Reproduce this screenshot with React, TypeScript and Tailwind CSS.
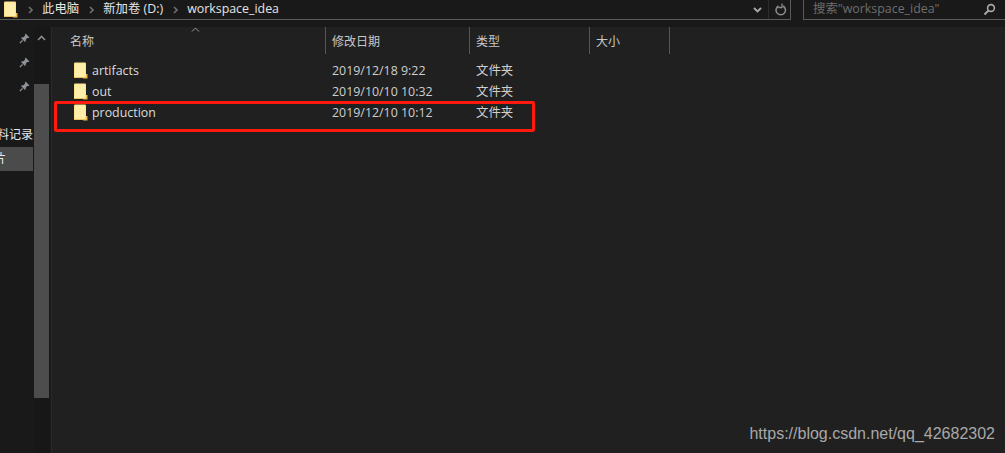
const font = "font-['Open_Sans','Noto_Sans_CJK_SC',sans-serif]";

function Folder() {
  return (
    <svg width="14" height="18" viewBox="0 0 14 18" className="shrink-0">
      <path d="M0 1.5 Q0 .5 1 .5 H11 Q12 .5 12 1.5 V16 H1 Q0 16 0 15 Z" fill="#fde48c" />
      <path d="M1 1.5 H11 V15 H1 Z" fill="#ffeeaa" />
      <path d="M9 16.5 H13.5 V12 H12 V15 H9 Z" fill="#e8b94a" />
      <path d="M0 15 H12 V16 H0 Z" fill="#eec45c" />
    </svg>
  );
}

function Chevron() {
  return (
    <svg width="5" height="8" viewBox="0 0 5 8" className="mx-[9.5px] shrink-0">
      <path d="M1 1 L4 4 L1 7" fill="none" stroke="#6e6e6e" strokeWidth="1.6" />
    </svg>
  );
}

function Pin() {
  return (
    <svg width="11" height="11" viewBox="0 0 11 11">
      <path d="M6.5 .5 L10.5 4.5 L9.5 5 L8.5 4.8 L6.8 6.6 L6.6 8.6 L6 9 L2 5 L2.4 4.4 L4.4 4.2 L6.2 2.5 L6 1.5 Z" fill="#8e949a" />
      <path d="M3.5 7.5 L.8 10.2" stroke="#8e949a" strokeWidth="1.2" />
    </svg>
  );
}

function Row({ name, date, mt }: { name: string; date: string; mt: string }) {
  return (
    <div className={`flex h-[18px] items-center text-[12.4px] text-[#dcdcdc] ${mt}`}>
      <div className="flex w-[280px] items-center gap-[4px] pl-[22px]">
        <Folder />
        <span>{name}</span>
      </div>
      <span className="w-[144px] text-[#cfcfcf]">{date}</span>
      <span className="text-[#cfcfcf]">文件夹</span>
    </div>
  );
}

function Head({ w, label }: { w: string; label: string }) {
  return (
    <div className={`flex h-[27px] items-center border-r border-[#555] pl-[6px] pt-[2px] text-[12px] text-[#c8c8c8] ${w}`}>
      {label}
    </div>
  );
}

export default function App() {
  return (
    <div className={`flex h-[453px] w-[1005px] flex-col overflow-hidden bg-[#202020] ${font}`}>
      <div className="flex h-[27px] shrink-0 items-start gap-[12px] bg-[#191919]">
        <div className="flex h-[20px] w-[791px] items-center border-r border-b border-[#5a5a5a] pl-[4px] text-[12.4px] text-[#e4e4e4]">
          <Folder />
          <Chevron />
          <span>此电脑</span>
          <Chevron />
          <span>新加卷 (D:)</span>
          <Chevron />
          <span>workspace_idea</span>
          <div className="ml-auto flex h-full items-center gap-[6px] pr-[3px]">
            <svg width="9" height="6" viewBox="0 0 9 6"><path d="M1 1 L4.5 4.5 L8 1" fill="none" stroke="#a8a8a8" strokeWidth="1.8" /></svg>
            <div className="h-full w-px bg-[#2c2c2c]" />
            <svg width="12" height="13" viewBox="0 0 12 13"><path d="M3.5 3 A4.7 4.7 0 1 0 8 3" fill="none" stroke="#8a8a8a" strokeWidth="1.5" /><path d="M7 .5 V4.5 H3.2" fill="none" stroke="#8a8a8a" strokeWidth="1.3" /></svg>
          </div>
        </div>
        <div className="flex h-[20px] flex-1 items-center border-b border-l border-[#5a5a5a] pl-[9px] pr-[9px] text-[12.4px] text-[#6e6e6e]">
          <span>搜索"workspace_idea"</span>
          <svg className="ml-auto" width="13" height="13" viewBox="0 0 13 13"><circle cx="8" cy="5" r="3.4" fill="none" stroke="#a8a8a8" strokeWidth="1.6" /><path d="M5.5 7.5 L1.5 11.5" stroke="#a8a8a8" strokeWidth="2" /></svg>
        </div>
      </div>
      <div className="flex min-h-0 flex-1">
        <div className="flex w-[52px] shrink-0 border-r border-[#2a2a2a] bg-[#191919]">
          <div className="relative w-[34px] shrink-0">
            <div className="flex flex-col items-end gap-[13px] pr-[4px] pt-[6px]">
              <Pin /><Pin /><Pin />
            </div>
            <div className="absolute left-0 top-[99px] w-full overflow-hidden whitespace-nowrap text-[12px] text-[#e8e8e8]">
              <span className="ml-[-15px] block">资料记录</span>
            </div>
            <div className="absolute left-0 top-[120px] flex h-[24px] w-[33px] items-center overflow-hidden bg-[#4b4b4b] text-[12px] text-[#e8e8e8]">
              <span className="ml-[-6px]">片</span>
            </div>
          </div>
          <div className="flex w-[15px] shrink-0 flex-col bg-[#171717]">
            <div className="flex h-[57px] justify-center pt-[8px]">
              <svg width="9" height="6" viewBox="0 0 9 6"><path d="M1 5 L4.5 1.5 L8 5" fill="none" stroke="#8a8a8a" strokeWidth="1.6" /></svg>
            </div>
            <div className="h-[314px] bg-[#4d4d4d]" />
          </div>
        </div>
        <div className="relative flex-1">
          <div className="relative flex">
            <Head w="w-[274px] pl-[18px]" label="名称" />
            <Head w="w-[144px]" label="修改日期" />
            <Head w="w-[120px]" label="类型" />
            <Head w="w-[80px]" label="大小" />
            <svg className="absolute left-[139px] top-[0px]" width="9" height="5" viewBox="0 0 9 5"><path d="M1 4.5 L4.5 1 L8 4.5" fill="none" stroke="#9a9a9a" strokeWidth="1" /></svg>
          </div>
          <div className="pt-[8px]">
            <Row name="artifacts" date="2019/12/18 9:22" mt="" />
            <Row name="out" date="2019/10/10 10:32" mt="mt-[3px]" />
            <Row name="production" date="2019/12/10 10:12" mt="mt-[3px]" />
          </div>
          <div className="absolute left-[2px] top-[74px] h-[31px] w-[481px] rounded-[2px] border-[3px] border-[#ff1a0d]" />
          <div className="absolute bottom-[9px] right-[10px] font-['Liberation_Sans',sans-serif] text-[16px] leading-[20px] text-[#a8a8a8]">
            https://blog.csdn.net/qq_42682302
          </div>
        </div>
      </div>
    </div>
  );
}
